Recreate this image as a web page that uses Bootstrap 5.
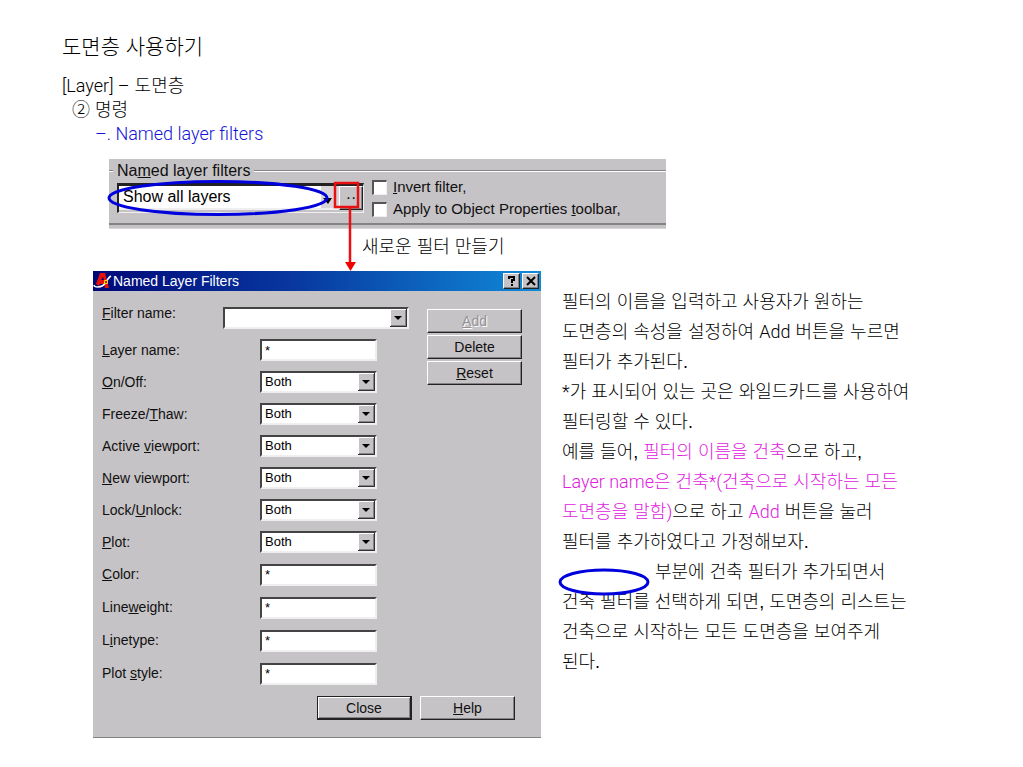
<!DOCTYPE html>
<html lang="ko">
<head>
<meta charset="utf-8">
<meta name="viewport" content="width=device-width, initial-scale=1">
<title>도면층 사용하기</title>
<link href="https://cdn.jsdelivr.net/npm/bootstrap@5.3.0/dist/css/bootstrap.min.css" rel="stylesheet">
<style>
  :root { --face: #c6c3c6; --shade: #848284; --ink: #101010; --pen: #0000dc; }
  body { font-family: "Liberation Sans", "Noto Sans CJK KR", sans-serif; font-size: 18px; font-weight: 300; color: #000; background: #fff; }
  .slide { padding: 32px 0 24px; }
  .heads { padding-left: 62px; line-height: 24px; margin-bottom: 13px; }
  .heads h1 { font-size: 21px; line-height: 30px; font-weight: 300; margin-bottom: 12px; }
  .heads h2, .heads h3, .heads h4 { font-size: 18px; line-height: 24px; font-weight: 300; margin: 0; }
  .heads h3 { padding-left: 10px; }
  .heads h4 { font-size: 18px; padding-left: 33px; color: #1414d8; }
  .latin { font-family: Roboto, "Liberation Sans", sans-serif; font-weight: 300; }

  .strip { margin-left: 109px; width: 54.4%; min-width: 530px; height: 70px; background: var(--face); font-size: 15px; color: var(--ink); border-bottom: 1px solid #d8d6d8; }
  .strip fieldset { height: 66px; border-bottom: 2px solid var(--shade); }
  .strip legend { float: none; font-size: 16px; line-height: 24px; margin: 0; gap: 4px; }
  .strip legend::before, .strip legend::after { content: ""; height: 2px; background: var(--shade); border-bottom: 1px solid #fff; }
  .strip legend::before { width: 4px; }
  .strip legend::after { flex: 1; }
  .strip-body { padding-left: 8px; gap: 8px; }
  .combo-frame { width: 247px; height: 30px; border: 1px solid #efefef; border-top: 3px solid #222; border-left: 2px solid #222; }
  .combo-frame select { flex: 1; border: 0; border-bottom: 2px solid #efefef; background: linear-gradient(#d8d6d8, #d8d6d8) right / 18px 100% no-repeat #fff; font-size: 16px; padding: 0 0 0 4px; height: 24px; line-height: 20px; }
  .more { width: 24px; height: 24px; line-height: 12px; font-size: 16px; }
  .checks { line-height: 22px; margin-top: -7px; }
  .checks label { gap: 6px; }
  .checks input { appearance: none; width: 15px; height: 15px; margin: 0; background: #fff; border: 1px solid #efefef; border-top: 2px solid #555; border-left: 2px solid #555; }
  .marks { left: -3px; top: 20px; width: 262px; height: 94px; overflow: visible; pointer-events: none; }
  .caption { padding-left: 362px; line-height: 24px; padding-top: 6px; height: 42px; margin: 0; }

  .lower { display: grid; grid-template-columns: minmax(430px, 448fr) minmax(0, 461fr); gap: 21px; padding-left: 93px; }
  .dialog { background: var(--face); border-bottom: 1px solid var(--shade); font-size: 14px; color: var(--ink); padding-bottom: 17px; }
  .titlebar { height: 20px; padding-right: 2px; color: #fff; background: linear-gradient(90deg, #000878, #0838a0 45%, #108ad8); }
  .titlebar h5 { font-size: 14px; line-height: 20px; font-weight: 400; }
  .cap { width: 17px; height: 16px; margin-left: 2px; }
  .face { background: var(--face); border: 1px solid; border-color: #fff #222 #222 #fff; box-shadow: inset -1px -1px 0 var(--shade); color: var(--ink); padding: 0; display: flex; align-items: center; justify-content: center; }
  .dlg-body { padding: 10px 18px 0 9px; gap: 18px; }
  .line { height: 32px; padding-right: 32px; }
  .line.tall { height: 33px; }
  .line.first { height: 33px; padding-right: 0; }
  .line.first label { padding-bottom: 8px; }
  .line input, .line select { width: 117px; height: 22px; font-size: 13px; line-height: 16px; padding: 0 0 0 3px; }
  .line.first select { width: 186px; }
  .sunk { appearance: none; border: 2px solid; border-color: #444 #efefef #efefef #444; border-radius: 0; background-color: #fff; color: #000; outline: 0; }
  .drop { background-repeat: no-repeat; background-position: right 0 center; background-size: 17px 18px;
    background-image: url("data:image/svg+xml,%3Csvg xmlns='http://www.w3.org/2000/svg' viewBox='0 0 17 18'%3E%3Cpath fill='%23333' d='M0 0h17v18H0z'/%3E%3Cpath fill='%23fff' d='M0 0h16v17H0z'/%3E%3Cpath fill='%23848284' d='M1 1h15v16H1z'/%3E%3Cpath fill='%23c6c3c6' d='M1 1h14v15H1z'/%3E%3Cpath d='M4 7h8l-4 4z'/%3E%3C/svg%3E"); }
  .side { width: 96px; gap: 2px; padding-top: 8px; }
  .push { height: 24px; width: 95px; font-size: 14px; line-height: 20px; }
  .push:disabled { color: #949294; text-shadow: 1px 1px 0 #fff; }
  .push.main { border-color: #222; border-width: 1px 2px 2px 1px; box-shadow: inset 1px 1px 0 #fff, inset -1px -1px 0 var(--shade); }
  .dlg-foot { padding: 6px 26px 0 0; gap: 8px; }

  .notes { line-height: 30px; padding-top: 16px; margin: 0; }
  .notes em { font-style: normal; color: #e020e0; }
  .blank { display: inline-block; width: 93px; height: 20px; vertical-align: middle; }
  .blank svg { left: -4px; top: 5px; }
</style>
</head>
<body>
<main class="slide">
  <header class="heads">
    <h1>도면층 사용하기</h1>
    <h2><span class="latin">[Layer] –</span> 도면층</h2>
    <h3>② 명령</h3>
    <h4 class="latin">–. Named layer filters</h4>
  </header>

  <section class="strip position-relative">
    <fieldset>
      <legend class="d-flex align-items-center"><span>Na<u>m</u>ed layer filters</span></legend>
      <div class="strip-body d-flex">
        <div class="combo-frame d-flex">
          <select class="sunk" aria-label="Named layer filters"><option>Show all layers</option></select>
          <button type="button" class="face more" aria-label="More filters">··</button>
        </div>
        <div class="checks">
          <label class="d-flex align-items-center"><input type="checkbox"><span><u>I</u>nvert filter,</span></label>
          <label class="d-flex align-items-center"><input type="checkbox"><span>Apply to Object Properties <u>t</u>oolbar,</span></label>
        </div>
      </div>
    </fieldset>
    <svg class="marks position-absolute" viewBox="0 0 262 94" fill="none" aria-hidden="true">
      <path d="M217 19l9 0-4 6z" fill="#000"/>
      <ellipse cx="112" cy="19" rx="109" ry="16.500" stroke="#0000dc" stroke-width="3"/>
      <path d="M229 4h23v24h-23zM244 28v56" stroke="#e81010" stroke-width="2.500"/>
      <path d="M239 83h11l-5.500 9z" fill="#f00000"/>
    </svg>
  </section>
  <p class="caption">새로운 필터 만들기</p>

  <div class="lower">
    <section class="dialog">
      <div class="titlebar d-flex align-items-center">
        <svg width="20" height="18" viewBox="0 0 20 18" aria-hidden="true">
          <path d="M3 12L7 1h5l4 15h-4l-1-4H7l-1 2z" fill="#e81008"/>
          <path d="M8 8l2-3 1 3z" fill="#000878"/>
          <path d="M1 13q0 2 4 2 5 0 8-5t5-6" stroke="#fff" stroke-width="1.500" fill="none"/>
          <path d="M11.500 8.500h3v3h-3z" fill="#e81008" stroke="#f8d820"/>
        </svg>
        <h5 class="m-0 flex-grow-1">Named Layer Filters</h5>
        <button type="button" class="face cap" aria-label="Help"><svg width="10" height="10" viewBox="0 0 10 10" fill="none" stroke="#000" stroke-width="2"><path d="M2 3V1h5v3H5v3M4 9h2"/></svg></button>
        <button type="button" class="face cap" aria-label="Close"><svg width="10" height="10" viewBox="0 0 10 10" stroke="#000" stroke-width="2"><path d="M1 1l8 8M9 1L1 9"/></svg></button>
      </div>
      <div class="dlg-body d-flex">
        <div class="flex-grow-1">
          <div class="line first d-flex align-items-center justify-content-between"><label for="f0"><u>F</u>ilter name:</label><select id="f0" class="sunk drop"><option></option></select></div>
          <div class="line d-flex align-items-center justify-content-between"><label for="f1"><u>L</u>ayer name:</label><input id="f1" class="sunk" value="*"></div>
          <div class="line d-flex align-items-center justify-content-between"><label for="f2"><u>O</u>n/Off:</label><select id="f2" class="sunk drop"><option>Both</option></select></div>
          <div class="line d-flex align-items-center justify-content-between"><label for="f3">Freeze/<u>T</u>haw:</label><select id="f3" class="sunk drop"><option>Both</option></select></div>
          <div class="line d-flex align-items-center justify-content-between"><label for="f4">Active <u>v</u>iewport:</label><select id="f4" class="sunk drop"><option>Both</option></select></div>
          <div class="line d-flex align-items-center justify-content-between"><label for="f5"><u>N</u>ew viewport:</label><select id="f5" class="sunk drop"><option>Both</option></select></div>
          <div class="line d-flex align-items-center justify-content-between"><label for="f6">Lock/<u>U</u>nlock:</label><select id="f6" class="sunk drop"><option>Both</option></select></div>
          <div class="line d-flex align-items-center justify-content-between"><label for="f7"><u>P</u>lot:</label><select id="f7" class="sunk drop"><option>Both</option></select></div>
          <div class="line tall d-flex align-items-center justify-content-between"><label for="f8"><u>C</u>olor:</label><input id="f8" class="sunk" value="*"></div>
          <div class="line tall d-flex align-items-center justify-content-between"><label for="f9">Line<u>w</u>eight:</label><input id="f9" class="sunk" value="*"></div>
          <div class="line tall d-flex align-items-center justify-content-between"><label for="f10">L<u>i</u>netype:</label><input id="f10" class="sunk" value="*"></div>
          <div class="line tall d-flex align-items-center justify-content-between"><label for="f11">Plot <u>s</u>tyle:</label><input id="f11" class="sunk" value="*"></div>
        </div>
        <div class="side d-flex flex-column">
          <button type="button" class="face push" disabled><span><u>A</u>dd</span></button>
          <button type="button" class="face push">Delete</button>
          <button type="button" class="face push"><span><u>R</u>eset</span></button>
        </div>
      </div>
      <div class="dlg-foot d-flex justify-content-end">
        <button type="button" class="face push main">Close</button>
        <button type="button" class="face push"><span><u>H</u>elp</span></button>
      </div>
    </section>

    <p class="notes">필터의 이름을 입력하고 사용자가 원하는<br>
      도면층의 속성을 설정하여 <span class="latin">Add</span> 버튼을 누르면<br>
      필터가 추가된다.<br>
      <span class="latin">*</span>가 표시되어 있는 곳은 와일드카드를 사용하여<br>
      필터링할 수 있다.<br>
      예를 들어, <em>필터의 이름을 건축</em>으로 하고,<br>
      <em><span class="latin">Layer name</span>은 건축<span class="latin">*(</span>건축으로 시작하는 모든<br>
      도면층을 말함<span class="latin">)</span></em>으로 하고 <em class="latin">Add</em> 버튼을 눌러<br>
      필터를 추가하였다고 가정해보자.<br>
      <span class="blank position-relative"><svg class="position-absolute" width="92" height="28" viewBox="0 0 92 28" fill="none" aria-hidden="true"><ellipse cx="46" cy="14" rx="44" ry="12" stroke="#0000dc" stroke-width="3"/></svg></span>부분에 건축 필터가 추가되면서<br>
      건축 필터를 선택하게 되면, 도면층의 리스트는<br>
      건축으로 시작하는 모든 도면층을 보여주게<br>
      된다.</p>
  </div>
</main>
<script src="https://cdn.jsdelivr.net/npm/bootstrap@5.3.0/dist/js/bootstrap.bundle.min.js"></script>
</body>
</html>
